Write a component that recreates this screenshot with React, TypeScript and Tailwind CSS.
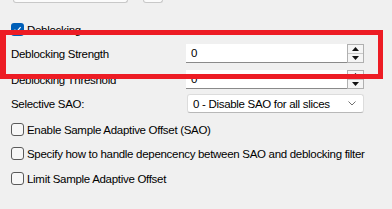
import React from "react";

function Check({ checked = false }: { checked?: boolean }) {
  return checked ? (
    <div className="w-[13px] h-[13px] rounded-[3px] bg-[#005fb8] flex items-center justify-center shrink-0">
      <svg width="9" height="9" viewBox="0 0 9 9">
        <path d="M1.5 4.8 L3.6 6.8 L7.6 2.2" stroke="white" strokeWidth="1.2" fill="none" />
      </svg>
    </div>
  ) : (
    <div className="w-[13px] h-[13px] rounded-[3px] border border-[#5a5a5a] bg-[#f7f7f7] shrink-0" />
  );
}

function Spin({ value }: { value: string }) {
  return (
    <div className="flex h-[19px]">
      <div className="w-[161px] h-full bg-white border-b border-[#8a8a8a] flex items-center pl-[5px] text-black">
        {value}
      </div>
      <div className="w-[17px] h-full border border-[#b0b0b0] bg-[#f5f5f5] flex flex-col">
        <div className="flex-1 flex items-center justify-center border-b border-[#c8c8c8]">
          <svg width="7" height="4" viewBox="0 0 7 4"><path d="M0 4 L3.5 0 L7 4 Z" fill="#111" /></svg>
        </div>
        <div className="flex-1 flex items-center justify-center">
          <svg width="7" height="4" viewBox="0 0 7 4"><path d="M0 0 L3.5 4 L7 0 Z" fill="#111" /></svg>
        </div>
      </div>
    </div>
  );
}

export default function App() {
  return (
    <div
      className="relative w-[392px] h-[209px] bg-[#f0f0f0] overflow-hidden text-[11.5px] tracking-[-0.3px] leading-[14px] text-black whitespace-nowrap"
      style={{ fontFamily: '"Segoe UI", "Liberation Sans", Arial, sans-serif' }}
    >
      {/* top partial boxes */}
      <div className="flex h-[3px]">
        <div className="ml-[13px] w-[115px] h-[3px] bg-[#fbfbfb] border border-t-0 border-[#c8c8c8] rounded-b-[3px]" />
        <div className="ml-[15px] w-[20px] h-[3px] bg-[#fbfbfb] border border-t-0 border-[#c8c8c8] rounded-b-[3px]" />
      </div>

      <div className="flex items-center gap-[3px] pl-[11px] mt-[20px] h-[13px]">
        <Check checked />
        <span>Deblocking</span>
      </div>

      <div className="flex items-center justify-between pl-[11px] pr-[28px] mt-[8px] h-[19px]">
        <span>Deblocking Strength</span>
        <Spin value="0" />
      </div>

      <div className="flex items-center justify-between pl-[11px] pr-[28px] mt-[7px] h-[19px]">
        <span>Deblocking Threshold</span>
        <Spin value="0" />
      </div>

      <div className="flex items-center justify-between pl-[11px] pr-[28px] mt-[5px] h-[19px]">
        <span>Selective SAO:</span>
        <div className="w-[177px] h-[19px] bg-white border border-[#dcdcdc] border-b-[#b8b8b8] rounded-[3px] flex items-center justify-between pl-[5px] pr-[7px]">
          <span>0 - Disable SAO for all slices</span>
          <svg width="8" height="5" viewBox="0 0 8 5"><path d="M0.5 0.5 L4 4 L7.5 0.5" stroke="#606060" strokeWidth="0.9" fill="none" /></svg>
        </div>
      </div>

      <div className="flex items-center gap-[3px] pl-[11px] mt-[10px] h-[13px]">
        <Check />
        <span>Enable Sample Adaptive Offset (SAO)</span>
      </div>
      <div className="flex items-center gap-[3px] pl-[11px] mt-[11px] h-[13px]">
        <Check />
        <span>Specify how to handle depencency between SAO and deblocking filter</span>
      </div>
      <div className="flex items-center gap-[3px] pl-[11px] mt-[12px] h-[13px]">
        <Check />
        <span>Limit Sample Adaptive Offset</span>
      </div>

      {/* red highlight overlay */}
      <div className="absolute left-0 top-[30px] w-[383px] h-[49px] border-[5px] border-l-[6px] border-[#ed1c24]" />
    </div>
  );
}
